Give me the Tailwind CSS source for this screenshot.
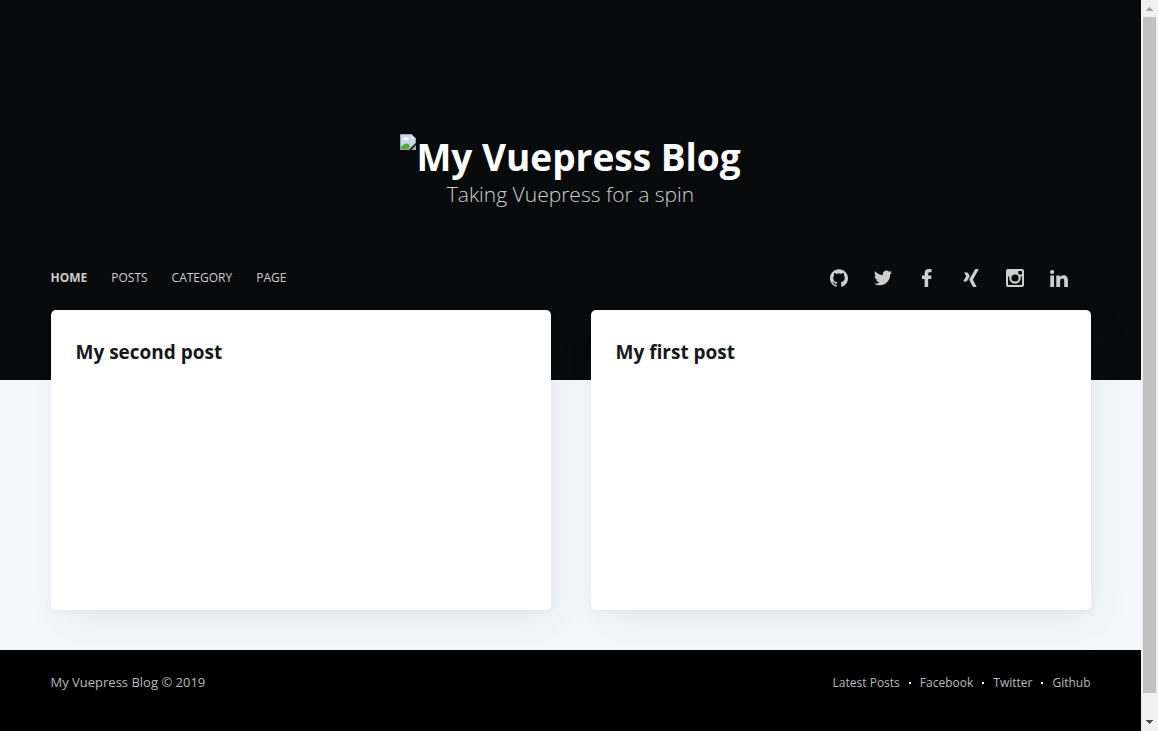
<!DOCTYPE html>
<html lang="en">
<head>
<meta charset="utf-8">
<meta name="viewport" content="width=device-width, initial-scale=1">
<title>My Vuepress Blog</title>
<script src="https://cdn.jsdelivr.net/npm/@tailwindcss/browser@4"></script>
</head>
<body class="flex min-h-screen bg-black font-['Segoe_UI','Open_Sans',sans-serif] antialiased">
<div class="flex min-w-0 flex-1 flex-col bg-[#f4f8fb]">
  <header class="h-[380px] bg-[#090a0b] px-10">
    <div class="mx-auto flex h-[310px] max-w-[1040px] flex-col">
      <div class="flex flex-1 flex-col items-center pt-[134px] text-center">
        <h1 class="flex items-start text-[37px] leading-[46px] font-bold text-white">
          <svg class="size-4" viewBox="0 0 16 16" aria-hidden="true">
            <path d="M0 0h11l5 5v4L9 16H0z" fill="#a3a3a3"/>
            <path d="M1 1h10v4h4v4l-7 6H1z" fill="#c5d8f5"/>
            <path d="M3 6a1.500 1.500 0 0 1 1-2 2 2 0 0 1 3.500 0A1.500 1.500 0 0 1 9 6z" fill="#fff"/>
            <path d="M1 13c3-4 7-5 9-1l-2 3H1z" fill="#54ae36"/>
            <path d="M11 0l5 5h-5z" fill="#eee"/>
            <path d="M16 11v5h-5z" fill="#9caf93"/>
          </svg>
          <span>My Vuepress Blog</span>
        </h1>
        <p class="text-[21px] leading-[29px] font-light text-[#cecece]">Taking Vuepress for a spin</p>
      </div>
      <div class="flex h-16 items-center justify-between">
        <nav class="flex gap-6 text-xs text-[#cecece] uppercase">
          <a href="#" class="font-bold">Home</a>
          <a href="#">Posts</a>
          <a href="#">Category</a>
          <a href="#">Page</a>
        </nav>
        <div class="flex gap-[26px] pr-[23px] text-[#cecece]">
          <a href="#" aria-label="Github"><svg class="size-[18px]" viewBox="0 0 24 24" fill="currentColor"><path d="M12 .297c-6.630 0-12 5.373-12 12 0 5.303 3.438 9.800 8.205 11.385.6.113.82-.258.82-.577 0-.285-.010-1.040-.015-2.040-3.338.724-4.042-1.610-4.042-1.610C4.422 18.070 3.633 17.700 3.633 17.700c-1.087-.744.084-.729.084-.729 1.205.084 1.838 1.236 1.838 1.236 1.070 1.835 2.809 1.305 3.495.998.108-.776.417-1.305.76-1.605-2.665-.3-5.466-1.332-5.466-5.930 0-1.310.465-2.380 1.235-3.220-.135-.303-.54-1.523.105-3.176 0 0 1.005-.322 3.300 1.230.96-.267 1.980-.399 3-.405 1.020.006 2.040.138 3 .405 2.280-1.552 3.285-1.230 3.285-1.230.645 1.653.24 2.873.12 3.176.765.84 1.230 1.910 1.230 3.220 0 4.610-2.805 5.625-5.475 5.920.42.36.81 1.096.81 2.220 0 1.606-.015 2.896-.015 3.286 0 .315.21.69.825.57C20.565 22.092 24 17.592 24 12.297c0-6.627-5.373-12-12-12"/></svg></a>
          <a href="#" aria-label="Twitter"><svg class="size-[18px]" viewBox="0 0 24 24" fill="currentColor"><path d="M23.954 4.569a10 10 0 0 1-2.825.775 4.958 4.958 0 0 0 2.163-2.723c-.951.555-2.005.959-3.127 1.184a4.920 4.920 0 0 0-8.384 4.482C7.691 8.094 4.066 6.130 1.640 3.161a4.822 4.822 0 0 0-.666 2.475c0 1.710.87 3.213 2.188 4.096a4.904 4.904 0 0 1-2.228-.616v.061a4.923 4.923 0 0 0 3.946 4.827 4.996 4.996 0 0 1-2.212.085 4.937 4.937 0 0 0 4.604 3.417 9.868 9.868 0 0 1-6.102 2.105c-.39 0-.779-.023-1.170-.067a13.995 13.995 0 0 0 7.557 2.209c9.054 0 13.999-7.496 13.999-13.986 0-.209 0-.42-.015-.63a9.936 9.936 0 0 0 2.460-2.548z"/></svg></a>
          <a href="#" aria-label="Facebook"><svg class="size-[18px]" viewBox="0 0 18 18" fill="currentColor"><path d="M6.600 18V10H4V6.600h2.600V4.200C6.600 1.600 8.200 0 11 0c1.300 0 2.200.1 2.600.2v3h-1.700c-1.400 0-1.700.6-1.700 1.600v1.800h3.300L13 10h-2.800v8z"/></svg></a>
          <a href="#" aria-label="Xing"><svg class="size-[18px]" viewBox="0 0 24 24" fill="currentColor"><path d="M18.188 0c-.517 0-.741.325-.927.660 0 0-7.455 13.224-7.702 13.657.015.024 4.919 9.023 4.919 9.023.17.308.436.660.967.660h3.454c.211 0 .375-.078.463-.22.089-.151.089-.346-.009-.536l-4.879-8.916a.022.022 0 0 1 0-.022L22.139.756c.095-.191.097-.387.006-.535C22.056.078 21.894 0 21.686 0h-3.498zM3.648 4.740c-.211 0-.385.074-.473.216-.09.149-.078.339.020.531l2.340 4.050c.004.010.004.016 0 .021L1.860 16.051c-.099.188-.093.381 0 .529.085.142.239.234.450.234h3.461c.518 0 .766-.348.945-.667l3.734-6.609-2.378-4.155c-.172-.315-.434-.659-.962-.659H3.648v.016z"/></svg></a>
          <a href="#" aria-label="Instagram"><svg class="size-[18px]" viewBox="0 0 18 18" fill="currentColor"><path fill-rule="evenodd" d="M2 0h14a2 2 0 0 1 2 2v14a2 2 0 0 1-2 2H2a2 2 0 0 1-2-2V2a2 2 0 0 1 2-2zm11 2a.7.7 0 0 0-.7.7v2.200a.7.7 0 0 0 .7.7h2.300a.7.7 0 0 0 .7-.7V2.700a.7.7 0 0 0-.7-.7zM2 7.600v7.700a.7.7 0 0 0 .7.7h12.600a.7.7 0 0 0 .7-.7V7.600h-1.500a5.700 5.700 0 1 1-11 0zM9 5.400a3.600 3.600 0 1 0 0 7.200 3.600 3.600 0 0 0 0-7.200z"/></svg></a>
          <a href="#" aria-label="LinkedIn"><svg class="size-[18px]" viewBox="0 0 18 18" fill="currentColor"><circle cx="2.100" cy="3" r="2.100"/><path d="M.3 6.500H4V18H.3zM6.300 6.500h3.500v1.600c.6-1.100 1.900-1.900 3.600-1.900 3.700 0 4.500 2.300 4.500 5.500V18h-3.700v-5.600c0-1.500-.1-3-1.900-3-1.900 0-2.200 1.400-2.200 2.900V18H6.300z"/></svg></a>
        </div>
      </div>
    </div>
  </header>
  <main class="-mt-[70px] px-10 pb-10">
    <div class="mx-auto grid max-w-[1040px] grid-cols-2 gap-10">
      <article class="min-h-[300px] rounded-[5px] bg-white p-[25px] shadow-[8px_14px_38px_rgba(39,44,49,0.06),1px_3px_8px_rgba(39,44,49,0.03)]">
        <a href="#"><h2 class="text-[19px] leading-[34px] font-bold text-[#15171a]">My second post</h2></a>
      </article>
      <article class="min-h-[300px] rounded-[5px] bg-white p-[25px] shadow-[8px_14px_38px_rgba(39,44,49,0.06),1px_3px_8px_rgba(39,44,49,0.03)]">
        <a href="#"><h2 class="text-[19px] leading-[34px] font-bold text-[#15171a]">My first post</h2></a>
      </article>
    </div>
  </main>
  <footer class="flex-1 bg-black px-10 pt-5 pb-9">
    <div class="mx-auto flex max-w-[1040px] items-center justify-between text-[13px] leading-[25px] text-[#bababa]">
      <section><a href="#">My Vuepress Blog</a> © 2019</section>
      <nav class="flex items-center gap-[9px] text-xs leading-[25px]">
        <a href="#">Latest Posts</a><span class="size-[2px] bg-white"></span>
        <a href="#">Facebook</a><span class="size-[2px] bg-white"></span>
        <a href="#">Twitter</a><span class="size-[2px] bg-white"></span>
        <a href="#">Github</a>
      </nav>
    </div>
  </footer>
</div>
<div class="sticky top-0 flex h-screen w-[17px] flex-col items-center bg-[#f1f1f1]" aria-hidden="true">
  <svg class="size-[17px]" viewBox="0 0 17 17" shape-rendering="crispEdges"><path d="M5 11h7L8.500 7z" fill="#a3a3a3"/></svg>
  <div class="flex w-[13px] flex-1 flex-col"><div class="h-[97%] bg-[#c1c1c1]"></div></div>
  <svg class="size-[17px]" viewBox="0 0 17 17" shape-rendering="crispEdges"><path d="M5 6h7L8.500 10z" fill="#505050"/></svg>
</div>
</body>
</html>
